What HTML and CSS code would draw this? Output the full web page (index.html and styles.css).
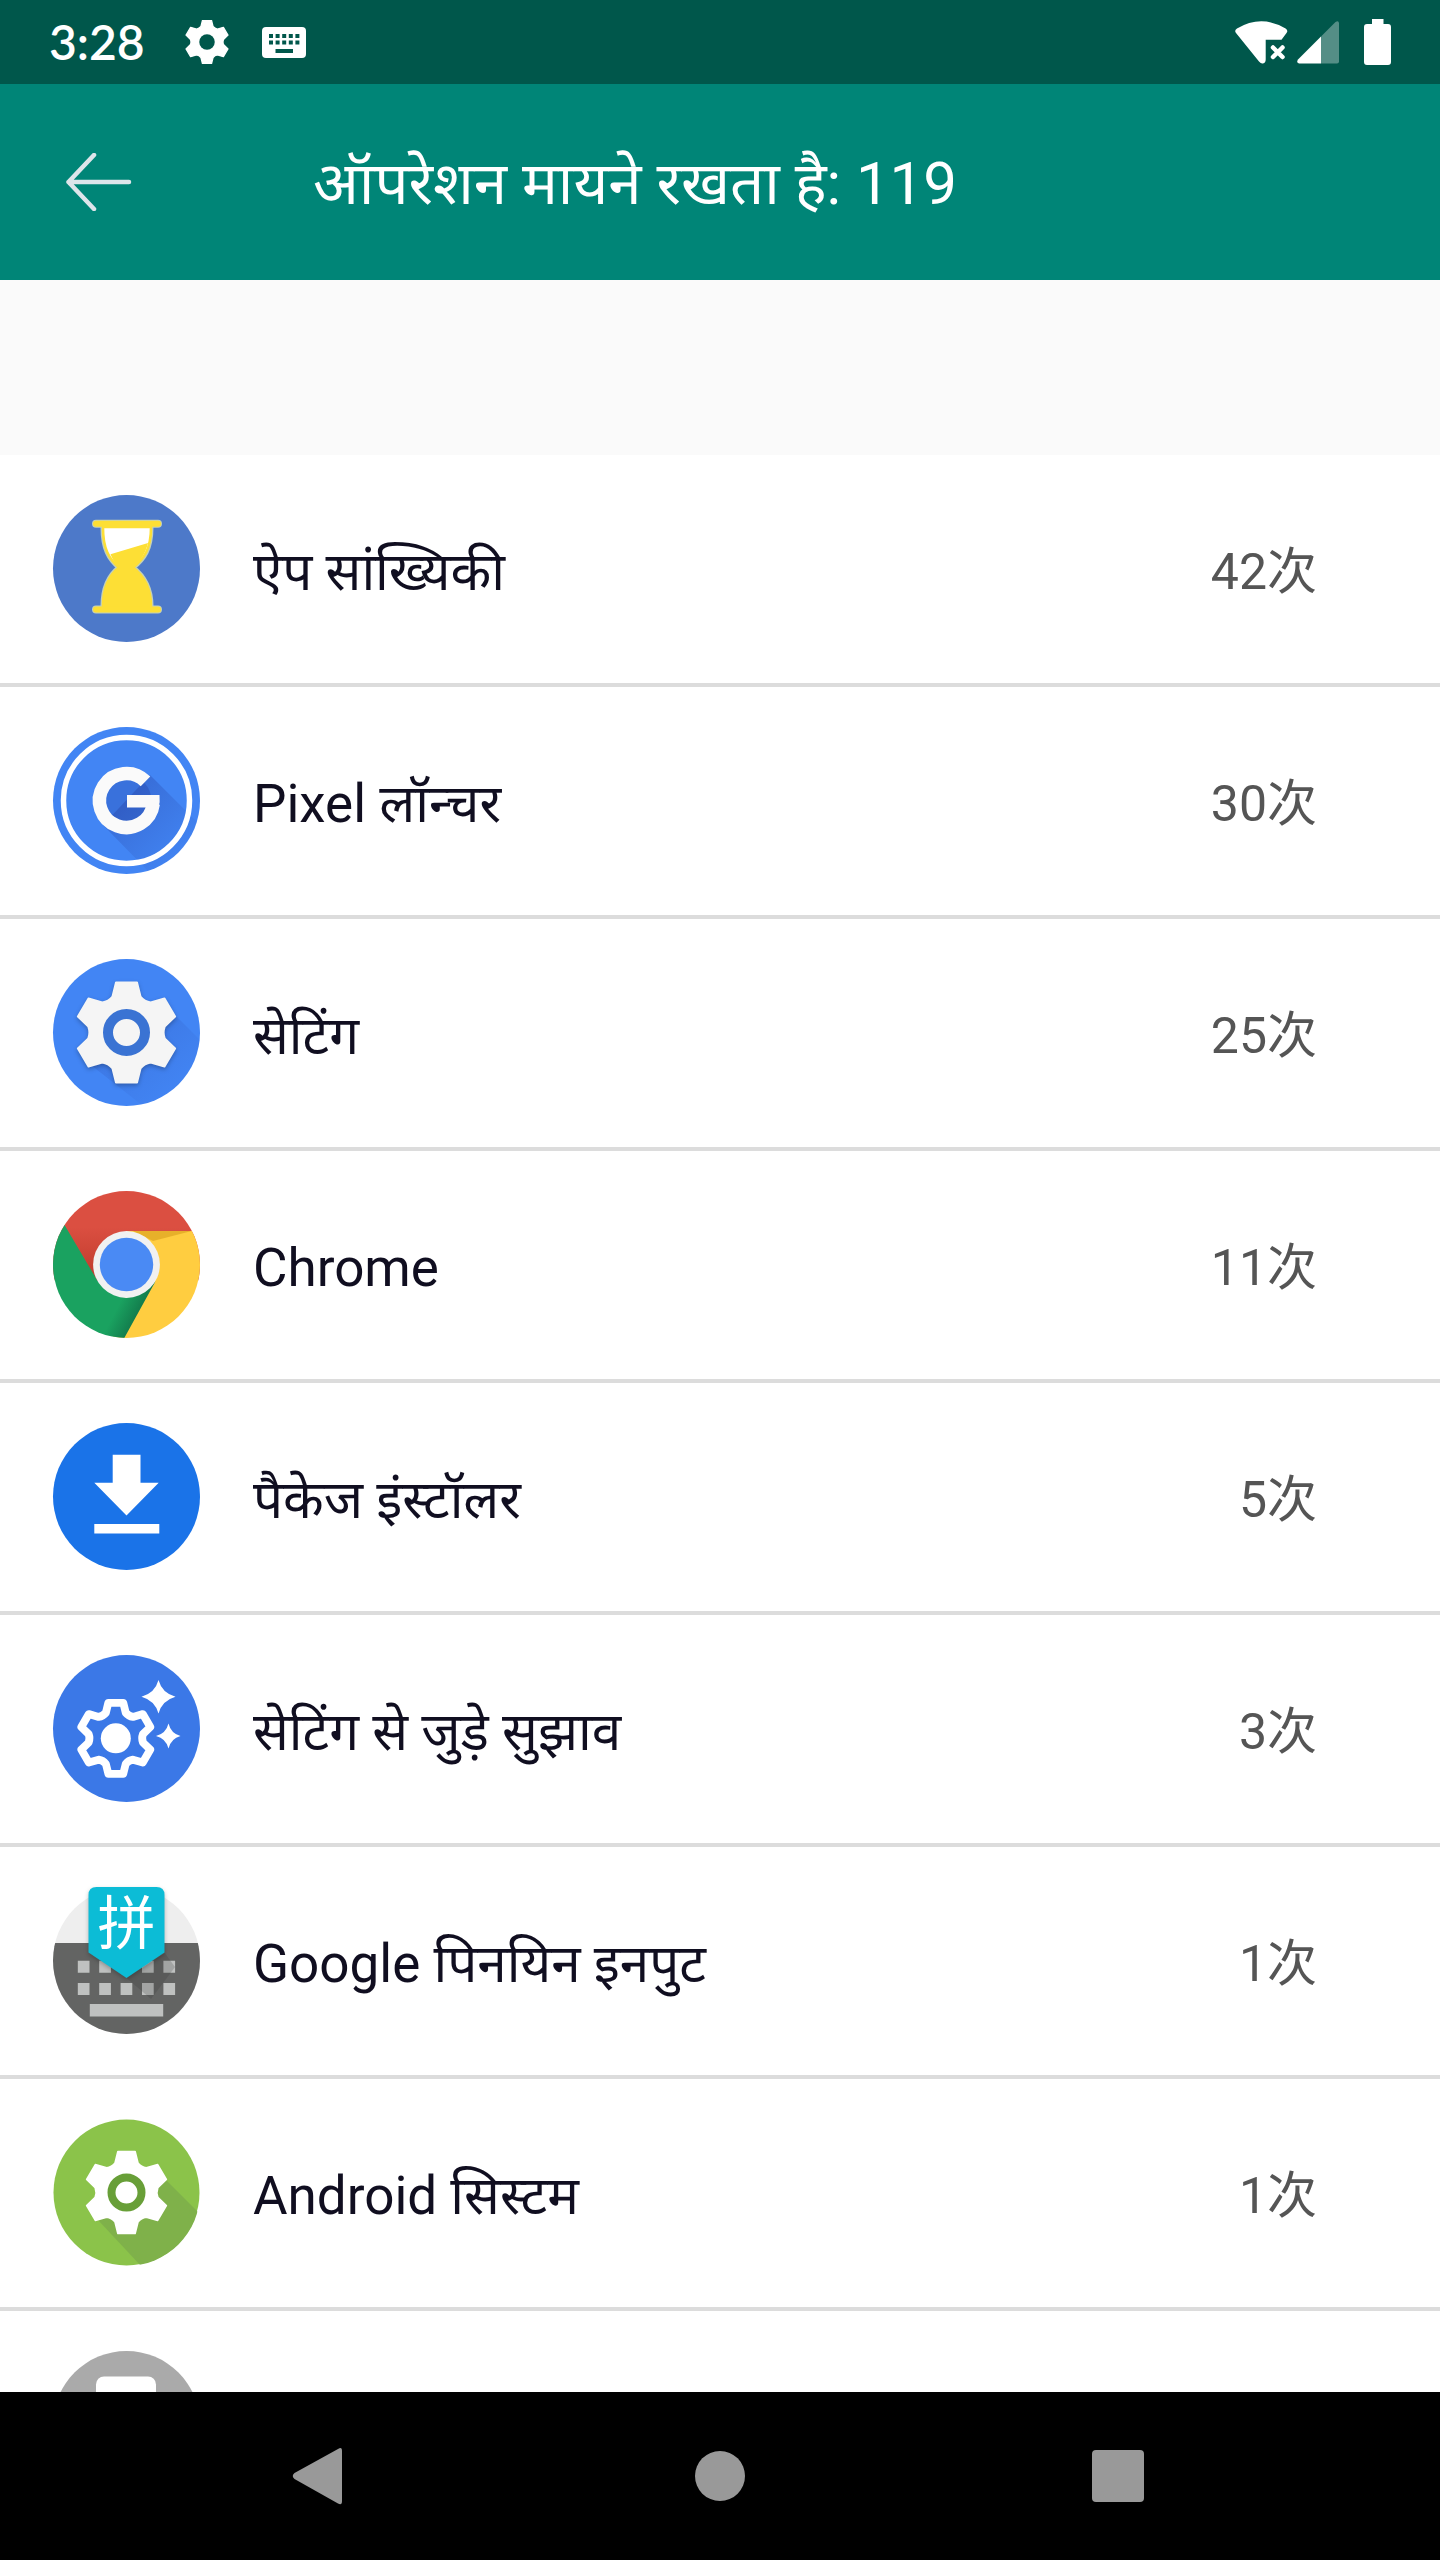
FILE: index.html
```html
<!DOCTYPE html>
<html lang="hi">
<head>
    <meta charset="UTF-8">
    <meta name="viewport" content="width=device-width, initial-scale=1.0">
    <title>ऐप सांख्यिकी</title>
    <link rel="stylesheet" href="styles.css">
</head>
<body>
    <!-- shared shapes -->
    <svg class="defs" aria-hidden="true">
        <defs>
            <path id="gear" stroke-linejoin="round" d="M-14-36L-10.500-50H10.500L14-36Q18-31 24.200-30.100L38-34.100L48.600-15.900L38.200-5.900Q36 0 38.200 5.900L48.600 15.900L38 34.100L24.200 30.100Q18 31 14 36L10.500 50H-10.500L-14 36Q-18 31-24.200 30.100L-38 34.100L-48.600 15.900L-38.200 5.900Q-36 0-38.200-5.900L-48.600-15.900L-38-34.100L-24.200-30.100Q-18-31-14-36Z"/>
            <clipPath id="round"><circle cx="73.500" cy="73.500" r="73.500"/></clipPath>
            <linearGradient id="fade" x1="0" y1="0" x2="1" y2="1">
                <stop offset="0.200" stop-color="#1a237e" stop-opacity="0.250"/>
                <stop offset="0.800" stop-color="#1a237e" stop-opacity="0.020"/>
            </linearGradient>
            <linearGradient id="redShade" x1="0" y1="0" x2="0" y2="1">
                <stop offset="0.400" stop-color="#db4f41"/>
                <stop offset="1" stop-color="#bd3a2b"/>
            </linearGradient>
            <linearGradient id="greenShade" gradientUnits="userSpaceOnUse" x1="55" y1="112" x2="86" y2="128">
                <stop offset="0.300" stop-color="#1aa260"/>
                <stop offset="1" stop-color="#12774a"/>
            </linearGradient>
        </defs>
    </svg>

    <div class="status-bar">
        <span class="time">3:28</span>
        <svg class="status-gear" width="44" height="44" viewBox="-51 -51 102 102" aria-hidden="true">
            <use href="#gear" fill="#fff" stroke="#fff" stroke-width="3"/>
            <circle r="18" fill="#00574b"/>
        </svg>
        <svg class="status-keyboard" width="44" height="31" viewBox="0 0 44 31" aria-hidden="true">
            <rect width="44" height="31" rx="4" fill="#fff"/>
            <path stroke="#00574b" stroke-width="4" stroke-dasharray="4 2.600" d="M7 9h31M7 15.500h31"/>
            <path fill="#00574b" d="M13.500 22h17.500v4h-17.500z"/>
        </svg>
        <div class="signals">
            <svg width="53" height="43" viewBox="0 0 53 43" aria-hidden="true">
                <path fill="#fff" d="M1 12Q-1 9.500 2 7.500Q26.300-7 50.600 7.500Q53.500 9.500 51.500 12L46.500 18.700H30.700V38.500Q30.700 42 28 42.500Q26 43 24 40.500Z"/>
                <path stroke="#fff" stroke-width="4.500" stroke-linecap="round" d="M38 26.500l9.500 9.500M47.500 26.500l-9.500 9.500"/>
            </svg>
            <svg width="42" height="43" viewBox="0 0 42 43" aria-hidden="true">
                <path fill="#fff" d="M24 15.500V42.500H2Q-1 42 1 38.500Z"/>
                <path fill="#fff" fill-opacity="0.330" d="M24 15.500L38.500 1Q41.500-1 42 2V40.500Q42 42.500 40 42.500H24Z"/>
            </svg>
            <svg class="battery" width="27" height="46" viewBox="0 0 27 46" aria-hidden="true">
                <path fill="#fff" d="M8 0h11.500v5H24q3 0 3 3v35q0 3-3 3H3q-3 0-3-3V8q0-3 3-3h5z"/>
            </svg>
        </div>
    </div>

    <header class="toolbar">
        <button class="back" type="button" aria-label="वापस">
            <svg width="66" height="58" viewBox="0 0 66 58" aria-hidden="true">
                <path fill="none" stroke="#dde5ea" stroke-width="4.500" stroke-linecap="round" stroke-linejoin="round" d="M28 2L2.500 29L28 56M2.500 29H63"/>
            </svg>
        </button>
        <h1>ऑपरेशन मायने रखता है: 119</h1>
    </header>

    <main>
        <ul class="apps">
            <li>
                <svg class="icon" viewBox="0 0 147 147" aria-hidden="true">
                    <circle cx="73.500" cy="73.500" r="73.500" fill="#4d79c9"/>
                    <g stroke="#c3d0b9" stroke-linecap="round">
                        <path stroke-width="8" d="M43 28.700H105M43 114.500H105"/>
                        <path stroke-width="5" d="M50 32C50 54 56 64 66 72.500C54 82 50 95 50 111H98C98 95 92 82 80 72.500C91 64 98 54 98 32Z"/>
                    </g>
                    <path fill="#fff" stroke="#fddf35" stroke-width="2.500" d="M50 32C50 54 56 64 66 72.500C54 82 50 95 50 111H98C98 95 92 82 80 72.500C91 64 98 54 98 32Z"/>
                    <path fill="#fddf35" d="M57.500 59.300L95 48C92 60 87 66 80 72.500C92 82 98 95 98 111H50C50 95 54 82 66 72.500Q61 68 57.500 59.300Z"/>
                    <path stroke="#fddf35" stroke-width="6" stroke-linecap="round" d="M43 28.700H105M43 114.500H105"/>
                </svg>
                <span class="name">ऐप सांख्यिकी</span>
                <span class="count">42次</span>
            </li>
            <li>
                <svg class="icon" viewBox="0 0 147 147" aria-hidden="true">
                    <circle cx="73.500" cy="73.500" r="73.500" fill="#4285f4"/>
                    <path clip-path="url(#round)" fill="url(#fade)" d="M97 48L147 98V147H98L50 98Z"/>
                    <circle cx="73.500" cy="73.500" r="25" fill="#1a237e" fill-opacity="0.200"/>
                    <circle cx="73.500" cy="73.500" r="63" fill="none" stroke="#fff" stroke-width="5.500"/>
                    <path fill="none" stroke="#fafafa" stroke-width="13.500" d="M92.500 54.400A27 27 0 1 0 100.200 77"/>
                    <path fill="#fafafa" d="M74 68h32.500q.8 7-1 12.500h-31.500z"/>
                </svg>
                <span class="name">Pixel लॉन्चर</span>
                <span class="count">30次</span>
            </li>
            <li>
                <svg class="icon" viewBox="0 0 147 147" aria-hidden="true">
                    <circle cx="73.500" cy="73.500" r="73.500" fill="#4285f4"/>
                    <path clip-path="url(#round)" fill="url(#fade)" d="M121 55L147 81V147H90L38 106Z" opacity="0.600"/>
                    <use href="#gear" class="soft" transform="translate(73.500 73.500)" fill="#f5f5f5" stroke="#f5f5f5" stroke-width="2"/>
                    <circle cx="73.500" cy="73.500" r="18.500" fill="#f5f5f5" stroke="#3a73d3" stroke-width="10"/>
                </svg>
                <span class="name">सेटिंग</span>
                <span class="count">25次</span>
            </li>
            <li>
                <svg class="icon" viewBox="0 0 147 147" aria-hidden="true">
                    <g clip-path="url(#round)">
                        <path fill="url(#redShade)" d="M0 0H147V90H0Z"/>
                        <path fill="#ffcd40" d="M73 40H147V147H60Z"/>
                        <path fill="#c98f10" fill-opacity="0.450" d="M80 40H138.700L100 50Z"/>
                        <path fill="url(#greenShade)" d="M0 14L12 34.700L44.600 90L73 107L102.400 90.500L71.300 147H0Z"/>
                    </g>
                    <circle cx="73.500" cy="73.500" r="33.400" fill="#f1f1f1"/>
                    <circle cx="73.500" cy="73.500" r="26.700" fill="#4a8af4"/>
                </svg>
                <span class="name">Chrome</span>
                <span class="count">11次</span>
            </li>
            <li>
                <svg class="icon" viewBox="0 0 147 147" aria-hidden="true">
                    <circle cx="73.500" cy="73.500" r="73.500" fill="#1a73e8"/>
                    <path fill="#fff" d="M59.700 31.700h27.800v28h18.200L73.500 92.500L41.300 59.700h18.400zM41.300 101h65v9.500h-65z"/>
                </svg>
                <span class="name">पैकेज इंस्टॉलर</span>
                <span class="count">5次</span>
            </li>
            <li>
                <svg class="icon" viewBox="0 0 147 147" aria-hidden="true">
                    <circle cx="73.500" cy="73.500" r="73.500" fill="#3b78e7"/>
                    <use href="#gear" transform="translate(62.800 83.300) scale(0.710)" fill="none" stroke="#fff" stroke-width="11"/>
                    <circle cx="62.800" cy="83.300" r="15" fill="#fff"/>
                    <path fill="#fff" d="M105.500 25Q109 38 122.500 41.700Q109 45.500 105.500 58.500Q102 45.500 88.500 41.700Q102 38 105.500 25ZM115.500 68.500Q118 78.500 127.500 81Q118 83.500 115.500 93.500Q113 83.500 103 81Q113 78.500 115.500 68.500Z"/>
                </svg>
                <span class="name">सेटिंग से जुड़े सुझाव</span>
                <span class="count">3次</span>
            </li>
            <li>
                <svg class="icon" viewBox="0 0 147 147" aria-hidden="true">
                    <circle cx="73.500" cy="73.500" r="73.500" fill="#eee"/>
                    <path clip-path="url(#round)" fill="#636463" d="M0 56H147V147H0Z"/>
                    <path stroke="#bfc1c0" stroke-width="12" stroke-dasharray="11.700 9.700" d="M24.800 79.700H122.500M24.800 102H122.500"/>
                    <path fill="#bfc1c0" d="M36.800 117h73.400v12.500h-73.400z"/>
                    <path fill="#333" fill-opacity="0.200" d="M111.800 66L122 80L98 112L73.500 91Z"/>
                    <path fill="#0cbcd6" class="soft" d="M43.500 0h60q8 0 8 8v57.500L73.500 91L35.500 65.500V8q0-8 8-8z"/>
                    <text class="pin" x="73.500" y="57" text-anchor="middle">拼</text>
                </svg>
                <span class="name">Google पिनयिन इनपुट</span>
                <span class="count">1次</span>
            </li>
            <li>
                <svg class="icon" viewBox="0 0 147 147" aria-hidden="true">
                    <circle cx="73.500" cy="73.500" r="73" fill="#8bc34a"/>
                    <path clip-path="url(#round)" fill="#7fb14a" d="M112 60L147 95V147H88L45 101Z"/>
                    <use href="#gear" transform="translate(73.500 73.500) scale(0.820)" fill="#fff" stroke="#fff" stroke-width="2"/>
                    <circle cx="73.500" cy="73.500" r="15" fill="#fff" stroke="#689f38" stroke-width="8"/>
                </svg>
                <span class="name">Android सिस्टम</span>
                <span class="count">1次</span>
            </li>
            <li>
                <svg class="icon" viewBox="0 0 147 147" aria-hidden="true">
                    <circle cx="73.500" cy="73.500" r="73.500" fill="#aaa"/>
                    <rect x="43" y="25.500" width="60" height="96" rx="8" fill="#fff"/>
                </svg>
            </li>
        </ul>
    </main>

    <nav class="nav-bar">
        <button type="button" aria-label="Back">
            <svg width="56" height="58" viewBox="0 0 56 58" aria-hidden="true">
                <path fill="#999" d="M2.500 26L46 2Q50-1 50 4V54Q50 59 46 56.500L2.500 32Q-1 29 2.500 26Z"/>
            </svg>
        </button>
        <button type="button" aria-label="Home">
            <svg width="52" height="52" viewBox="0 0 52 52" aria-hidden="true">
                <circle cx="26" cy="26" r="25" fill="#999"/>
            </svg>
        </button>
        <button type="button" aria-label="Recents">
            <svg width="56" height="52" viewBox="0 0 56 52" aria-hidden="true">
                <rect width="52" height="52" rx="4" fill="#999"/>
            </svg>
        </button>
    </nav>
</body>
</html>
```
FILE: styles.css
```css
* {
    box-sizing: border-box;
    margin: 0;
    padding: 0;
}

body {
    height: 100vh;
    display: flex;
    flex-direction: column;
    background: #fff;
    font-family: Roboto, "Noto Sans Devanagari", "Noto Sans CJK SC", sans-serif;
}

svg {
    display: block;
    flex-shrink: 0;
}

button {
    border: none;
    background: none;
    cursor: pointer;
}

.defs {
    position: absolute;
    width: 0;
    height: 0;
}

/* status bar */
.status-bar {
    flex-shrink: 0;
    display: flex;
    align-items: center;
    height: 84px;
    padding: 0 49px;
    background: #00574b;
    color: #fff;
}

.time {
    font-family: Lato, Roboto, sans-serif;
    font-size: 48px;
    font-weight: 600;
    line-height: 84px;
}

.status-gear {
    margin-left: 40px;
}

.status-keyboard {
    margin-left: 33px;
}

.signals {
    display: flex;
    align-items: center;
    gap: 9px;
    margin-left: auto;
}

.battery {
    margin-left: 16px;
}

/* toolbar */
.toolbar {
    flex-shrink: 0;
    display: flex;
    align-items: center;
    min-height: 196px;
    background: #008577;
    color: #fff;
}

.back {
    padding: 40px 66px;
}

.toolbar h1 {
    margin-left: 115px;
    padding-top: 4px;
    font-size: 60px;
    font-weight: 400;
    line-height: 84px;
}

/* app list */
main {
    flex: 1;
    min-height: 0;
    overflow-y: auto;
    scrollbar-width: none;
}

.apps {
    list-style: none;
    border-top: 175px solid #fafafa;
}

.apps li {
    display: flex;
    align-items: center;
    gap: 53px;
    min-height: 232px;
    padding: 0 123px 2px 53px;
    border-bottom: 4px solid #dcdcdc;
}

.icon {
    width: 147px;
    height: 147px;
    overflow: visible;
}

.soft {
    filter: drop-shadow(0 2px 2px rgba(0, 0, 0, 0.25));
}

.pin {
    font-family: "Noto Sans CJK SC", sans-serif;
    font-size: 58px;
    fill: #fff;
}

.name,
.count {
    padding-top: 8px;
    line-height: 72px;
}

.name {
    flex: 1;
    font-size: 53px;
    color: #100e20;
}

.count {
    font-size: 50px;
    color: #555;
}

/* navigation bar */
.nav-bar {
    flex-shrink: 0;
    display: grid;
    grid-template-columns: repeat(3, 1fr);
    height: 168px;
    padding: 0 120px;
    background: #000;
}

.nav-bar button {
    display: flex;
    align-items: center;
    justify-content: center;
}
```
